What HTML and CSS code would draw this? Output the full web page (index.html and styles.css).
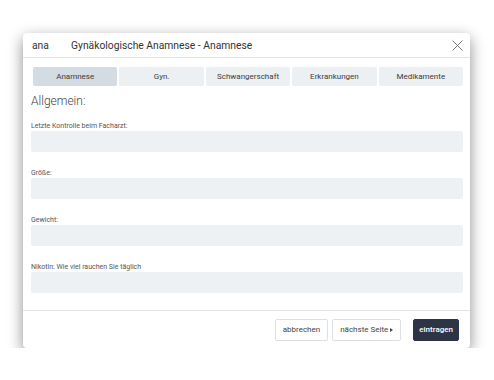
FILE: index.html
```
<!DOCTYPE html>
<html lang="de">
<head>
<meta charset="utf-8">
<link rel="stylesheet" href="styles.css">
</head>
<body>
<div class="stage">
  <div class="modal">
    <div class="modal-header">
      <span class="brand">ana</span>
      <span class="title">Gynäkologische Anamnese - Anamnese</span>
      <span class="close" aria-label="schließen">
        <svg width="11" height="11" viewBox="0 0 11 11"><path d="M0.5 0.5 L10.5 10.5 M10.5 0.5 L0.5 10.5" stroke="#777" stroke-width="1" fill="none"/></svg>
      </span>
    </div>
    <div class="modal-body">
      <div class="tabs">
        <div class="tab active">Anamnese</div>
        <div class="tab">Gyn.</div>
        <div class="tab">Schwangerschaft</div>
        <div class="tab">Erkrankungen</div>
        <div class="tab">Medikamente</div>
      </div>
      <h2 class="section">Allgemein:</h2>
      <div class="field">
        <label class="label">Letzte Kontrolle beim Facharzt:</label>
        <div class="input"></div>
      </div>
      <div class="field">
        <label class="label">Größe:</label>
        <div class="input"></div>
      </div>
      <div class="field">
        <label class="label">Gewicht:</label>
        <div class="input"></div>
      </div>
      <div class="field">
        <label class="label">Nikotin: Wie viel rauchen Sie täglich</label>
        <div class="input"></div>
      </div>
    </div>
    <div class="modal-footer">
      <button class="btn">abbrechen</button>
      <button class="btn">nächste Seite<span class="caret"></span></button>
      <button class="btn primary">eintragen</button>
    </div>
  </div>
</div>
</body>
</html>
```
FILE: styles.css
```
html, body {
  margin: 0;
  padding: 0;
  background: #fff;
  font-family: Roboto, "Liberation Sans", sans-serif;
}
.stage {
  padding: 33px 0 0 23px;
}
.modal {
  width: 447px;
  height: 315px;
  background: #fff;
  border-radius: 4px;
  box-shadow: 0 5px 15px rgba(0,0,0,0.45);
  display: flex;
  flex-direction: column;
  box-sizing: border-box;
}
.modal-header {
  height: 25px;
  border-bottom: 1px solid #e3e5e8;
  display: flex;
  align-items: center;
  padding: 0 7px 0 9px;
  color: #333;
  font-size: 10.3px;
}
.brand {
  width: 39px;
}
.title {
  flex: 1;
}
.close {
  width: 11px;
  height: 11px;
  display: flex;
}
.modal-body {
  flex: 1;
  padding: 9px 7px 0 8px;
}
.tabs {
  display: flex;
  gap: 2px;
  margin-left: 2px;
}
.tab {
  flex: 1;
  height: 19px;
  background: #edf0f3;
  border-radius: 2px;
  font-size: 8px;
  color: #3c3c3c;
  display: flex;
  align-items: center;
  justify-content: center;
}
.tab.active {
  background: #d3dbe3;
}
.section {
  margin: 6px 0 12px;
  font-size: 12px;
  font-weight: 300;
  line-height: 18px;
  color: #444;
}
.field {
  display: flex;
  flex-direction: column;
  margin-bottom: 17px;
}
.label {
  font-size: 7px;
  line-height: 9px;
  color: #555;
  margin-bottom: 0;
}
.input {
  height: 21px;
  background: #eef1f4;
  border-radius: 2px;
}
.modal-footer {
  height: 39px;
  border-top: 1px solid #e3e5e8;
  display: flex;
  align-items: center;
  justify-content: flex-end;
  padding: 0 11px 0 0;
  gap: 4px;
  box-sizing: border-box;
}
.btn {
  height: 22px;
  font-family: Roboto, "Liberation Sans", sans-serif;
  font-size: 8px;
  color: #444;
  background: #fff;
  border: 1px solid #dcdfe3;
  border-radius: 2px;
  padding: 0 7px;
  display: flex;
  align-items: center;
}
.caret {
  width: 0;
  height: 0;
  border-left: 3px solid #444;
  border-top: 2.5px solid transparent;
  border-bottom: 2.5px solid transparent;
  margin-left: 2px;
}
.btn.primary {
  background: #2d3446;
  border-color: #2d3446;
  color: #fff;
  font-weight: 500;
  padding: 0 5px;
  margin-left: 8px;
}
```
